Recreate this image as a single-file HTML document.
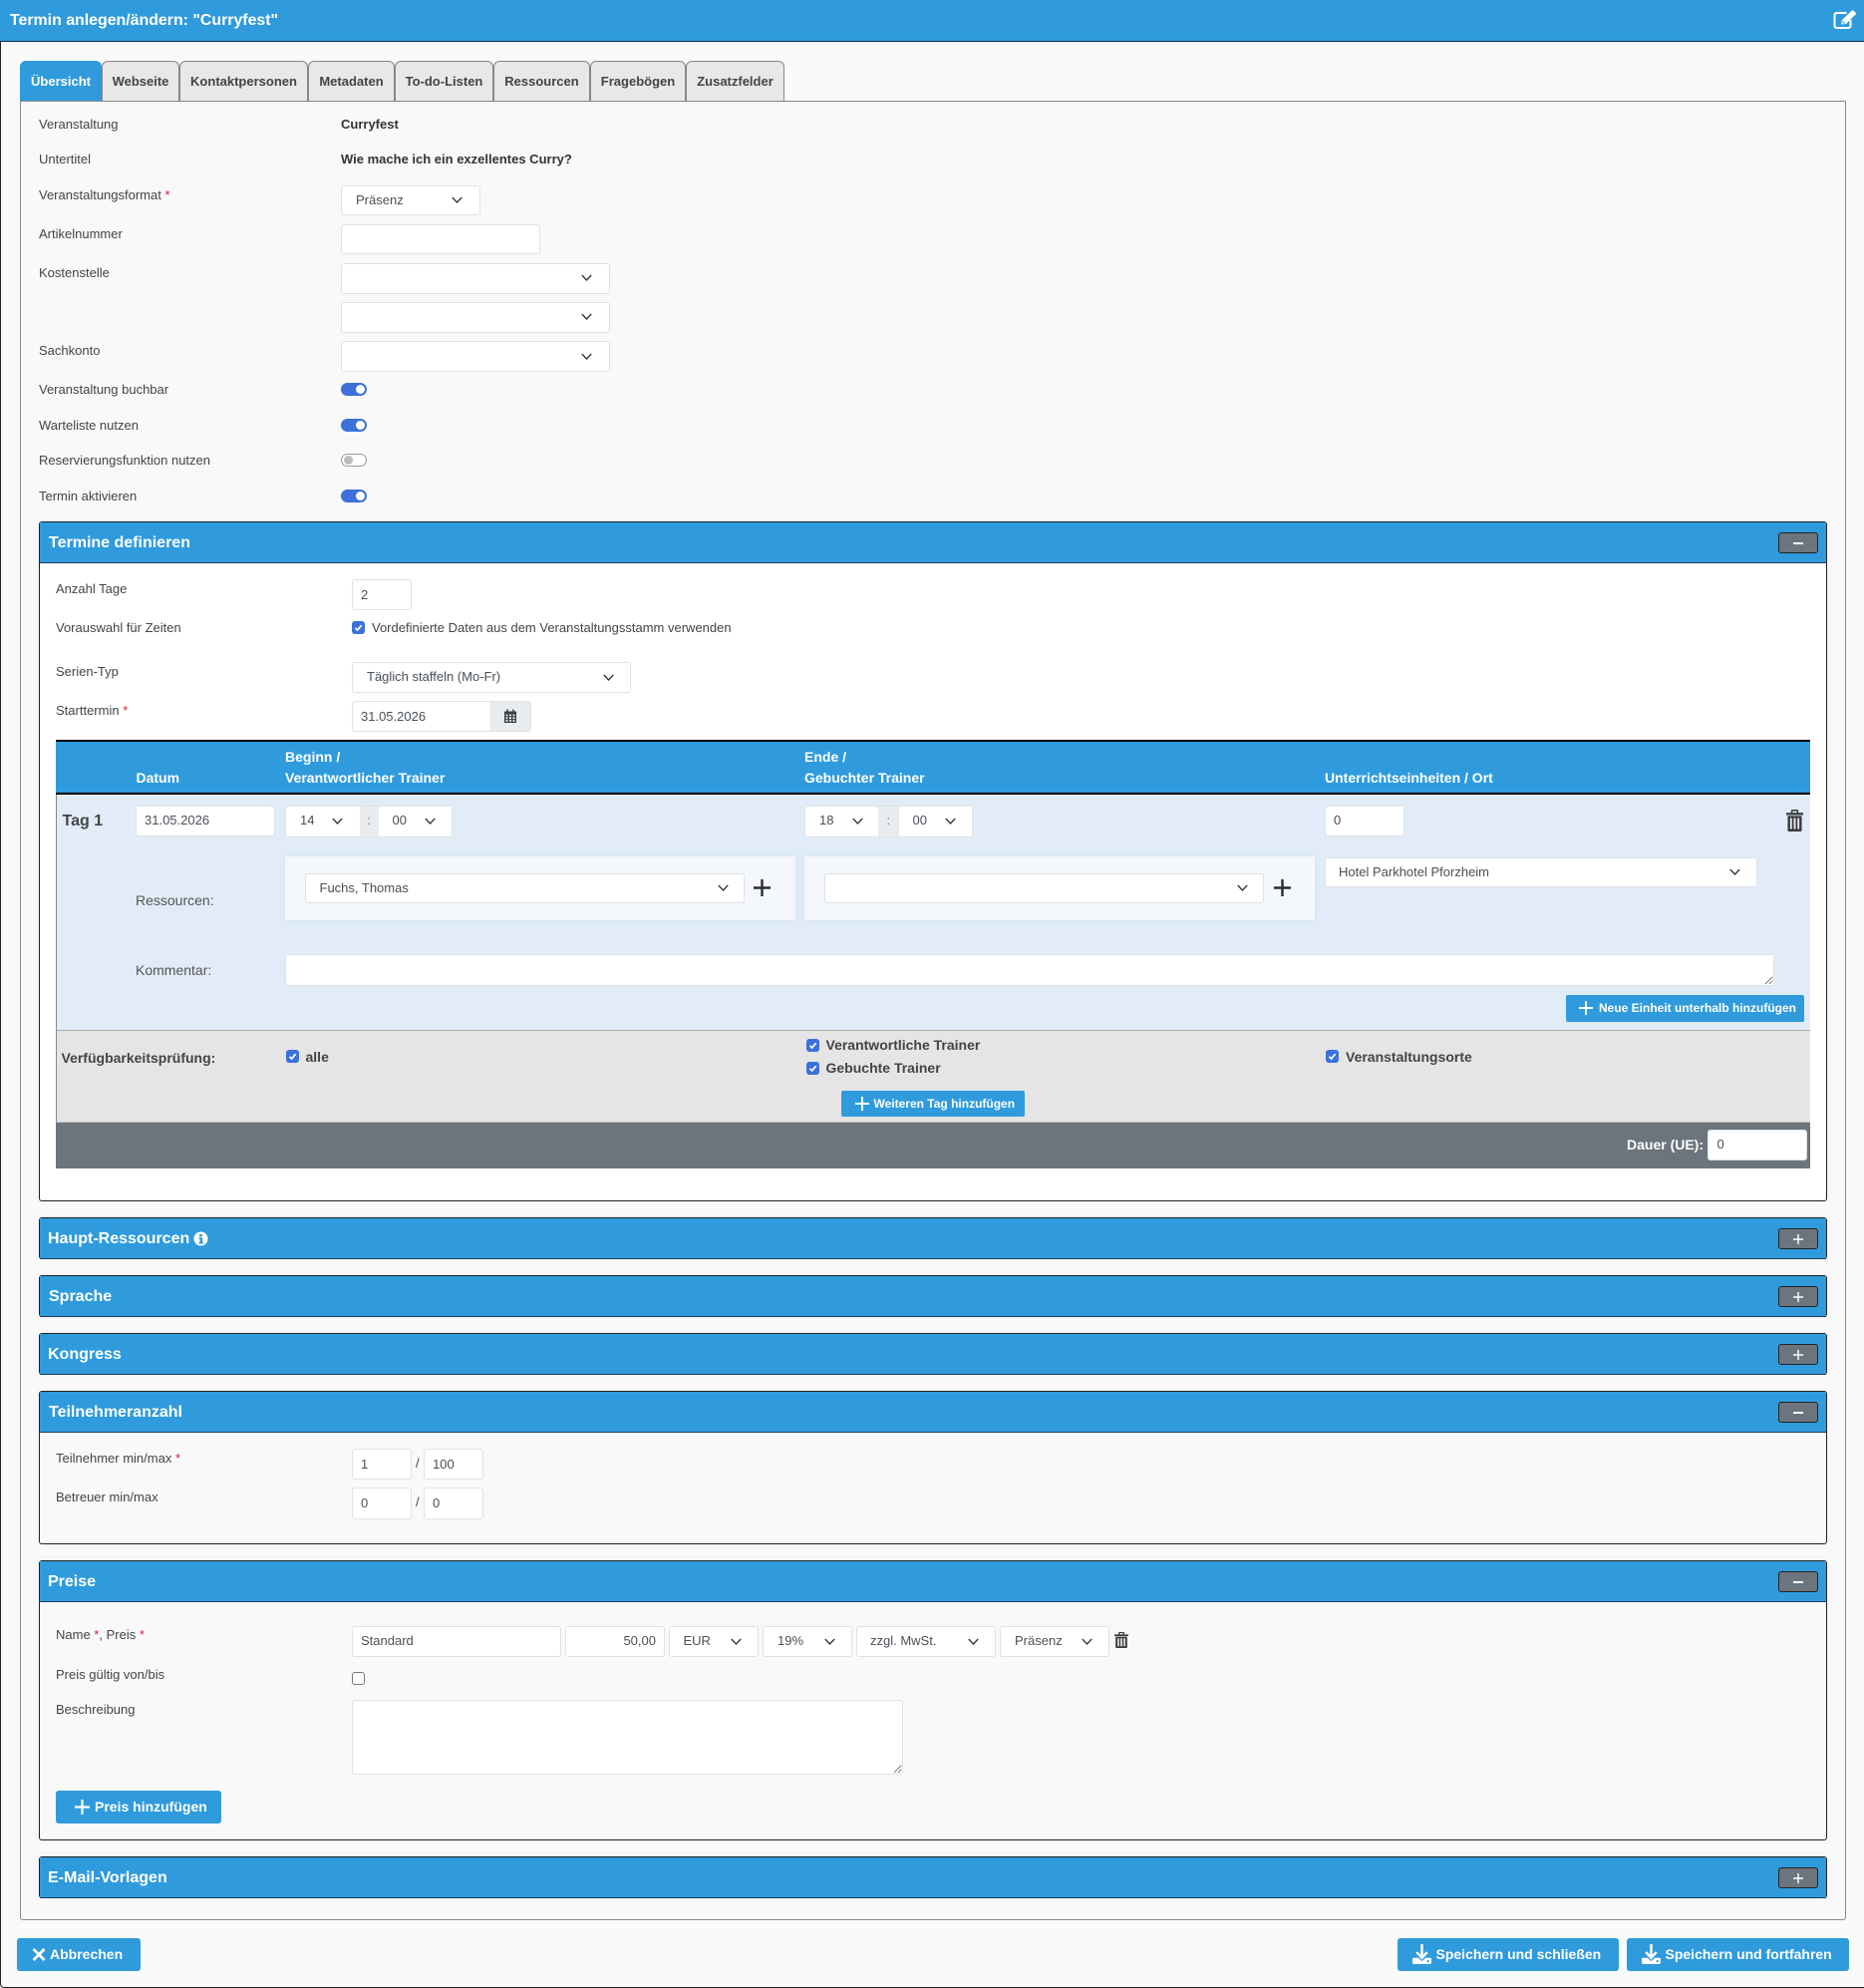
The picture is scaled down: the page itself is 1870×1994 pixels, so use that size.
<!DOCTYPE html>
<html lang="de"><head><meta charset="utf-8"><title>Termin anlegen/ändern</title>
<style>
html,body{margin:0;padding:0}
body{position:relative;width:1870px;height:1994px;overflow:hidden;background:#f9fafa;font-family:"Liberation Sans",sans-serif;font-size:13px;color:#444}
div,svg,textarea{position:absolute;box-sizing:border-box}
.t{line-height:20px;white-space:nowrap;height:20px}
.tb{font-weight:bold}
.i{background:#fff;border:1px solid #dee2e6;border-radius:3px}
.v{font-size:13px;color:#495057}
.tab{top:61px;height:40px;background:#e8e8e8;border:1px solid #888;border-bottom:0;border-radius:6px 6px 0 0;font-weight:bold;font-size:13px;line-height:40px;text-align:center;color:#444}
.sec{left:39px;width:1794px;border:1px solid #222;border-radius:3px;background:#f9f9f9;box-shadow:0 0 8px rgba(0,0,0,.03)}
.sh{left:0;top:0;right:0;height:41px;background:#2f9bdd;border-bottom:1px solid #1c3f58}
.st{left:9px;top:11px;font-size:16px;font-weight:bold;color:#fff;line-height:20px;white-space:nowrap}
.tg{left:1744px;top:10px;width:40px;height:21px;background:#6c757d;border:1px solid #222;border-radius:3px}
.tg svg{left:12px;top:2.5px}
.btn{background:#2f9bdd;border-radius:3px;color:#fff;font-weight:bold}
.sw{width:26px;height:13px;border-radius:7px;background:#3b71d9}
.sw div{right:2px;top:2px;width:9px;height:9px;background:#fff;border-radius:50%}
.ck{width:13px;height:13px;border-radius:3px;background:#3b71d9}
.c{width:11px;height:7px;overflow:visible}
.r{color:#d9232e}
.w{color:#fff}
</style></head><body>
<svg width="0" height="0" style="left:0;top:0"><defs>
<symbol id="ch" viewBox="0 0 11 7"><path d="M.8 1 5.500 6 10.200 1" fill="none" stroke="#343a40" stroke-width="1.400"/></symbol>
<symbol id="ok" viewBox="0 0 13 13"><path d="M3.500 6.800 5.600 9 9.600 4.200" fill="none" stroke="#fff" stroke-width="1.700"/></symbol>
<symbol id="pl" viewBox="0 0 14 14"><path d="M7 0v14M0 7h14" fill="none" stroke="#fff" stroke-width="2"/></symbol>
<symbol id="pd" viewBox="0 0 17 17"><path d="M8.500 0v17M0 8.500h17" fill="none" stroke="#2b2b2b" stroke-width="2.400"/></symbol>
<symbol id="tr" viewBox="0 0 14 16" preserveAspectRatio="none"><path d="M0 2.400h4V1q0-1 1-1h4q1 0 1 1v1.400h4V4H0zM5.300 1.100v1.300h3.400V1.100z" fill="#3a3a3a" fill-rule="evenodd"/><path fill-rule="evenodd" fill="#3a3a3a" d="M1.200 4.600h11.600V15q0 1-1 1H2.200q-1 0-1-1zM3.200 6.200v8h1.500v-8zM6.200 6.200v8h1.600v-8zM9.300 6.200v8h1.500v-8z"/></symbol>
<symbol id="dl" viewBox="0 0 20 21"><path d="M10 0v13" stroke="#fff" stroke-width="2.600" fill="none"/><path d="M4.500 8.500 10 14.500l5.500-6" stroke="#fff" stroke-width="2.600" fill="none"/><path d="M1 14.500h5l4 3.500 4-3.500h5q1 0 1 1.500v3q0 2-2 2H2q-2 0-2-2v-3q0-1.500 1-1.500z" fill="#fff"/><circle cx="16.500" cy="18" r="1.200" fill="#2f9bdd"/></symbol>
</defs></svg>

<!-- page frame -->
<div style="left:0;top:0;width:1870px;height:1994px;border-left:1px solid #222;border-bottom:1px solid #222;border-radius:0 0 0 4px"></div>
<div style="left:0;top:0;width:1870px;height:42px;background:#2f9bdd;border-bottom:1px solid #14283a"></div>
<div class="t w tb" style="left:10px;top:10.500px;font-size:15.900px">Termin anlegen/ändern: "Curryfest"</div>
<svg style="left:1838px;top:8px" width="29" height="22" viewBox="0 0 28 22"><path d="M14 5H4.500Q2 5 2 7.500v10Q2 20 4.500 20h11q2.500 0 2.500-2.500V12" fill="none" stroke="#fff" stroke-width="2"/><path d="M8.500 16.500 9.500 12 20 2l4 3.500L13.500 16z" fill="#fff"/><path d="M10 13.500 12 15.500" stroke="#2f9bdd" stroke-width="1.200"/></svg>

<!-- tab panel -->
<div style="left:20px;top:101px;width:1832px;height:1825px;border:1px solid #888;border-radius:0 0 3px 3px;background:#f9f9f9"></div>
<div class="tab" style="left:20px;width:82px;background:#2f9bdd;border-color:#2f9bdd;color:#fff">Übersicht</div>
<div class="tab" style="left:102px;width:78px">Webseite</div>
<div class="tab" style="left:180px;width:129px">Kontaktpersonen</div>
<div class="tab" style="left:309px;width:87px">Metadaten</div>
<div class="tab" style="left:396px;width:99px">To-do-Listen</div>
<div class="tab" style="left:495px;width:97px">Ressourcen</div>
<div class="tab" style="left:592px;width:96px">Fragebögen</div>
<div class="tab" style="left:688px;width:99px">Zusatzfelder</div>

<!-- top form -->
<div class="t" style="left:39px;top:115px">Veranstaltung</div>
<div class="t tb" style="left:342px;top:115px;color:#333">Curryfest</div>
<div class="t" style="left:39px;top:150px">Untertitel</div>
<div class="t tb" style="left:342px;top:150px;color:#333">Wie mache ich ein exzellentes Curry?</div>
<div class="t" style="left:39px;top:186px">Veranstaltungsformat <span class="r">*</span></div>
<div class="i" style="left:342px;top:186px;width:140px;height:30px"></div>
<div class="t v" style="left:357px;top:191px">Präsenz</div>
<svg class="c" style="left:453px;top:197px"><use href="#ch"/></svg>
<div class="t" style="left:39px;top:225px">Artikelnummer</div>
<div class="i" style="left:342px;top:225px;width:200px;height:30px"></div>
<div class="t" style="left:39px;top:264px">Kostenstelle</div>
<div class="i" style="left:342px;top:264px;width:270px;height:31px"></div>
<svg class="c" style="left:583px;top:275px"><use href="#ch"/></svg>
<div class="i" style="left:342px;top:303px;width:270px;height:31px"></div>
<svg class="c" style="left:583px;top:314px"><use href="#ch"/></svg>
<div class="t" style="left:39px;top:342px">Sachkonto</div>
<div class="i" style="left:342px;top:342px;width:270px;height:31px"></div>
<svg class="c" style="left:583px;top:354px"><use href="#ch"/></svg>
<div class="t" style="left:39px;top:381px">Veranstaltung buchbar</div>
<div class="sw" style="left:342px;top:384px"><div></div></div>
<div class="t" style="left:39px;top:417px">Warteliste nutzen</div>
<div class="sw" style="left:342px;top:420px"><div></div></div>
<div class="t" style="left:39px;top:452px">Reservierungsfunktion nutzen</div>
<div class="sw" style="left:342px;top:455px;background:#fff;border:1px solid #999"><div style="left:2px;right:auto;top:1px;background:#bbb"></div></div>
<div class="t" style="left:39px;top:488px">Termin aktivieren</div>
<div class="sw" style="left:342px;top:491px"><div></div></div>

<!-- Termine definieren -->
<div class="sec" style="top:523px;height:682px;background:#fff">
  <div class="sh"></div><div class="st">Termine definieren</div>
  <div class="tg"><svg width="14" height="14"><path d="M2 7h10" stroke="#fff" stroke-width="2"/></svg></div>
</div>
<div class="t" style="left:56px;top:581px">Anzahl Tage</div>
<div class="i" style="left:353px;top:581px;width:60px;height:31px"></div>
<div class="t v" style="left:362px;top:587px">2</div>
<div class="t" style="left:56px;top:620px">Vorauswahl für Zeiten</div>
<div class="ck" style="left:353px;top:623px"><svg width="13" height="13"><use href="#ok"/></svg></div>
<div class="t" style="left:373px;top:620px">Vordefinierte Daten aus dem Veranstaltungsstamm verwenden</div>
<div class="t" style="left:56px;top:664px">Serien-Typ</div>
<div class="i" style="left:353px;top:664px;width:280px;height:31px"></div>
<div class="t v" style="left:368px;top:669px">Täglich staffeln (Mo-Fr)</div>
<svg class="c" style="left:605px;top:676px"><use href="#ch"/></svg>
<div class="t" style="left:56px;top:703px">Starttermin <span class="r">*</span></div>
<div class="i" style="left:353px;top:703px;width:180px;height:31px;background:#e9ecef"></div>
<div class="i" style="left:353px;top:703px;width:140px;height:31px;border-radius:3px 0 0 3px"></div>
<div class="t v" style="left:362px;top:709px">31.05.2026</div>
<svg style="left:506px;top:711px" width="12" height="14" viewBox="0 0 12 14"><path fill="#3a3f44" fill-rule="evenodd" d="M0 2.500h2.300V.5h1.500v2h4.400V.5h1.500v2H12V14H0zM1.500 5.500v1.800h2V5.500zM5 5.500v1.800h2V5.500zM8.500 5.500v1.800h2V5.500zM1.500 8.300v1.800h2V8.300zM5 8.300v1.800h2V8.300zM8.500 8.300v1.800h2V8.300zM1.500 11v1.700h2V11zM5 11v1.700h2V11zM8.500 11v1.700h2V11z"/></svg>

<!-- table -->
<div style="left:56px;top:742px;width:1760px;height:55px;background:#2f9bdd;border-top:2px solid #000;border-bottom:2px solid #000"></div>
<div class="t w tb" style="left:136.500px;top:770px;font-size:14px">Datum</div>
<div class="t w tb" style="left:286px;top:749px;font-size:14px">Beginn /</div>
<div class="t w tb" style="left:286px;top:770px;font-size:14px">Verantwortlicher Trainer</div>
<div class="t w tb" style="left:807px;top:749px;font-size:14px">Ende /</div>
<div class="t w tb" style="left:807px;top:770px;font-size:14px">Gebuchter Trainer</div>
<div class="t w tb" style="left:1329px;top:770px;font-size:14px">Unterrichtseinheiten / Ort</div>

<div style="left:56px;top:797px;width:1760px;height:236px;background:#e1ecf8;border-left:1px solid #888"></div>
<div class="t tb" style="left:62.500px;top:814px;font-size:16px">Tag 1</div>
<div class="i" style="left:136px;top:808px;width:140px;height:31px"></div>
<div class="t v" style="left:145px;top:813px">31.05.2026</div>
<div class="i" style="left:286px;top:807.500px;width:167.500px;height:32px"></div>
<div style="left:360.500px;top:808.500px;width:19px;height:30px;background:#e9ecef;text-align:center;line-height:28px;color:#777">:</div>
<div class="t v" style="left:301px;top:813px">14</div>
<svg class="c" style="left:332.500px;top:820px"><use href="#ch"/></svg>
<div class="t v" style="left:393.500px;top:813px">00</div>
<svg class="c" style="left:425.500px;top:820px"><use href="#ch"/></svg>
<div class="i" style="left:807px;top:807.500px;width:168.500px;height:32px"></div>
<div style="left:881px;top:808.500px;width:20.500px;height:30px;background:#e9ecef;text-align:center;line-height:28px;color:#777">:</div>
<div class="t v" style="left:822px;top:813px">18</div>
<svg class="c" style="left:854.500px;top:820px"><use href="#ch"/></svg>
<div class="t v" style="left:915.500px;top:813px">00</div>
<svg class="c" style="left:947.500px;top:820px"><use href="#ch"/></svg>
<div class="i" style="left:1329px;top:808px;width:80px;height:30.500px"></div>
<div class="t v" style="left:1338px;top:813px">0</div>
<svg style="left:1792px;top:812px" width="17" height="22"><use href="#tr" width="17" height="22"/></svg>

<div class="t" style="left:136px;top:893px;font-size:14px;color:#555">Ressourcen:</div>
<div style="left:286px;top:859px;width:512px;height:64px;background:#f4f7fb;box-shadow:0 0 6px rgba(120,150,190,.12)"></div>
<div class="i" style="left:306px;top:875.500px;width:440.500px;height:30px"></div>
<div class="t v" style="left:320.500px;top:880.500px">Fuchs, Thomas</div>
<svg class="c" style="left:719.500px;top:887px"><use href="#ch"/></svg>
<svg style="left:756px;top:882px" width="17" height="17"><use href="#pd"/></svg>
<div style="left:807px;top:859px;width:512px;height:64px;background:#f4f7fb;box-shadow:0 0 6px rgba(120,150,190,.12)"></div>
<div class="i" style="left:827px;top:875.500px;width:441px;height:30px"></div>
<svg class="c" style="left:1240.500px;top:887px"><use href="#ch"/></svg>
<svg style="left:1278px;top:882px" width="17" height="17"><use href="#pd"/></svg>
<div class="i" style="left:1329px;top:859.500px;width:433.500px;height:30px"></div>
<div class="t v" style="left:1343px;top:864.500px">Hotel Parkhotel Pforzheim</div>
<svg class="c" style="left:1734.500px;top:871px"><use href="#ch"/></svg>

<div class="t" style="left:136px;top:963px;font-size:14px;color:#555">Kommentar:</div>
<textarea style="left:286px;top:957px;height:32px;width:1494px;border:1px solid #dee2e6;border-radius:3px;background:#fff;margin:0;padding:0;outline:0"></textarea>
<div class="btn t" style="left:1571px;top:998px;width:239px;height:27px;line-height:27px;font-size:12px;padding-left:33px;border-radius:2px">Neue Einheit unterhalb hinzufügen</div>
<svg style="left:1584px;top:1004px" width="14" height="14"><use href="#pl"/></svg>

<div style="left:56px;top:1032.500px;width:1760px;height:93px;background:#e5e5e5;border-top:1px solid #aaa;border-bottom:1px solid #c4c4c4;border-left:1px solid #888"></div>
<div class="t tb" style="left:61.500px;top:1051px;font-size:14px">Verfügbarkeitsprüfung:</div>
<div class="ck" style="left:287px;top:1053px"><svg width="13" height="13"><use href="#ok"/></svg></div>
<div class="t tb" style="left:306.500px;top:1050px;font-size:14px">alle</div>
<div class="ck" style="left:809px;top:1041.500px"><svg width="13" height="13"><use href="#ok"/></svg></div>
<div class="t tb" style="left:828.500px;top:1037.500px;font-size:14px">Verantwortliche Trainer</div>
<div class="ck" style="left:809px;top:1065px"><svg width="13" height="13"><use href="#ok"/></svg></div>
<div class="t tb" style="left:828.500px;top:1061px;font-size:14px">Gebuchte Trainer</div>
<div class="ck" style="left:1330px;top:1053px"><svg width="13" height="13"><use href="#ok"/></svg></div>
<div class="t tb" style="left:1350px;top:1050px;font-size:14px">Veranstaltungsorte</div>
<div class="btn t" style="left:844px;top:1093.500px;width:184px;height:26.500px;line-height:26px;font-size:12px;padding-left:32.500px;border-radius:2px">Weiteren Tag hinzufügen</div>
<svg style="left:858px;top:1100px" width="14" height="14"><use href="#pl"/></svg>

<div style="left:56px;top:1125.500px;width:1760px;height:46.500px;background:#6c757d"></div>
<div class="t w tb" style="left:1632px;top:1138px;font-size:14px">Dauer (UE):</div>
<div class="i" style="left:1713px;top:1133px;width:100px;height:31px"></div>
<div class="t v" style="left:1722.500px;top:1138px">0</div>

<!-- collapsed sections -->
<div class="sec" style="top:1221px;height:42px"><div class="sh"></div><div class="st" style="left:8px">Haupt-Ressourcen</div>
  <svg style="left:154px;top:12.500px" width="15" height="15" viewBox="0 0 15 15"><circle cx="7.500" cy="7.500" r="7" fill="#fff"/><path d="M6 3h3v2.300H6zM5.500 6.300H9v4.700h1v1.500H5.500V11h1V7.800h-1z" fill="#2f9bdd"/></svg>
  <div class="tg"><svg width="14" height="14"><use href="#pl" width="10" height="10" x="2" y="2"/></svg></div></div>
<div class="sec" style="top:1279px;height:42px"><div class="sh"></div><div class="st">Sprache</div>
  <div class="tg"><svg width="14" height="14"><use href="#pl" width="10" height="10" x="2" y="2"/></svg></div></div>
<div class="sec" style="top:1337px;height:42px"><div class="sh"></div><div class="st" style="left:8px">Kongress</div>
  <div class="tg"><svg width="14" height="14"><use href="#pl" width="10" height="10" x="2" y="2"/></svg></div></div>

<!-- Teilnehmeranzahl -->
<div class="sec" style="top:1395px;height:154px"><div class="sh"></div><div class="st">Teilnehmeranzahl</div>
  <div class="tg"><svg width="14" height="14"><path d="M2 7h10" stroke="#fff" stroke-width="2"/></svg></div></div>
<div class="t" style="left:56px;top:1453px">Teilnehmer min/max <span class="r">*</span></div>
<div class="i" style="left:353px;top:1453px;width:60px;height:31px"></div>
<div class="t v" style="left:362px;top:1458.500px">1</div>
<div class="t" style="left:417px;top:1458px">/</div>
<div class="i" style="left:425px;top:1453px;width:60px;height:31px"></div>
<div class="t v" style="left:434px;top:1458.500px">100</div>
<div class="t" style="left:56px;top:1492px">Betreuer min/max</div>
<div class="i" style="left:353px;top:1492px;width:60px;height:31.500px"></div>
<div class="t v" style="left:362px;top:1497.500px">0</div>
<div class="t" style="left:417px;top:1497px">/</div>
<div class="i" style="left:425px;top:1492px;width:60px;height:31.500px"></div>
<div class="t v" style="left:434px;top:1497.500px">0</div>

<!-- Preise -->
<div class="sec" style="top:1565px;height:281px"><div class="sh"></div><div class="st" style="left:8px">Preise</div>
  <div class="tg"><svg width="14" height="14"><path d="M2 7h10" stroke="#fff" stroke-width="2"/></svg></div></div>
<div class="t" style="left:56px;top:1630px">Name <span class="r">*</span>, Preis <span class="r">*</span></div>
<div class="i" style="left:353px;top:1631px;width:209.500px;height:31px"></div>
<div class="t v" style="left:362px;top:1636px">Standard</div>
<div class="i" style="left:567px;top:1631px;width:100px;height:31px"></div>
<div class="t v" style="left:567px;width:91px;text-align:right;top:1636px">50,00</div>
<div class="i" style="left:671px;top:1631px;width:90px;height:31px"></div>
<div class="t v" style="left:685.500px;top:1636px">EUR</div>
<svg class="c" style="left:733px;top:1643px"><use href="#ch"/></svg>
<div class="i" style="left:765px;top:1631px;width:89.500px;height:31px"></div>
<div class="t v" style="left:780px;top:1636px">19%</div>
<svg class="c" style="left:827px;top:1643px"><use href="#ch"/></svg>
<div class="i" style="left:859px;top:1631px;width:140px;height:31px"></div>
<div class="t v" style="left:873px;top:1636px">zzgl. MwSt.</div>
<svg class="c" style="left:971px;top:1643px"><use href="#ch"/></svg>
<div class="i" style="left:1003px;top:1631px;width:110px;height:31px"></div>
<div class="t v" style="left:1018px;top:1636px">Präsenz</div>
<svg class="c" style="left:1085px;top:1643px"><use href="#ch"/></svg>
<svg style="left:1118px;top:1637px" width="14" height="16"><use href="#tr" width="14" height="16"/></svg>
<div class="t" style="left:56px;top:1670px">Preis gültig von/bis</div>
<div style="left:353px;top:1677px;width:13px;height:13px;background:#fff;border:1px solid #777;border-radius:3px"></div>
<div class="t" style="left:56px;top:1705px">Beschreibung</div>
<textarea style="left:353px;top:1705px;width:553px;height:74.500px;border:1px solid #dee2e6;border-radius:3px;background:#fff;margin:0;padding:0;outline:0"></textarea>
<div class="btn t" style="left:56px;top:1796px;width:166px;height:33px;line-height:33px;font-size:14px;padding-left:39px">Preis hinzufügen</div>
<svg style="left:75px;top:1805px" width="15" height="15" viewBox="0 0 14 14"><use href="#pl"/></svg>

<!-- E-Mail -->
<div class="sec" style="top:1862px;height:42px"><div class="sh"></div><div class="st" style="left:8px">E-Mail-Vorlagen</div>
  <div class="tg"><svg width="14" height="14"><use href="#pl" width="10" height="10" x="2" y="2"/></svg></div></div>

<!-- footer -->
<div class="btn t" style="left:17px;top:1944px;width:124px;height:33px;line-height:33px;font-size:14px;padding-left:33px">Abbrechen</div>
<svg style="left:32px;top:1954px" width="14" height="13" viewBox="0 0 14 13"><path d="M1.500 1 12.500 12M12.500 1 1.500 12" stroke="#fff" stroke-width="2.700" fill="none"/></svg>
<div class="btn t" style="left:1402px;top:1944px;width:222px;height:33px;line-height:33px;font-size:14px;padding-left:38.500px">Speichern und schließen</div>
<svg style="left:1417px;top:1950px" width="19" height="20"><use href="#dl" width="19" height="20"/></svg>
<div class="btn t" style="left:1632px;top:1944px;width:223px;height:33px;line-height:33px;font-size:14px;padding-left:38.500px">Speichern und fortfahren</div>
<svg style="left:1646.500px;top:1950px" width="19" height="20"><use href="#dl" width="19" height="20"/></svg>
</body></html>
